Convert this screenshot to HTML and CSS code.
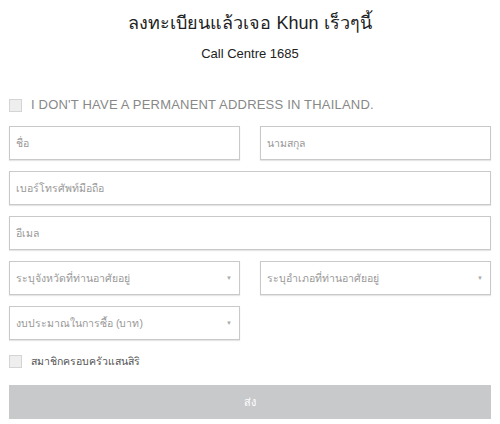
FILE: index.html
```html
<!DOCTYPE html>
<html lang="th">
<head>
    <meta charset="UTF-8">
    <meta name="viewport" content="width=device-width, initial-scale=1.0">
    <title>ลงทะเบียน</title>
    <link rel="stylesheet" href="styles.css">
</head>
<body>
    <div class="register-frame">
        <h1 class="title">ลงทะเบียนแล้วเจอ Khun เร็วๆนี้</h1>
        <p class="call-centre">Call Centre 1685</p>

        <label class="check-row address-check">
            <span class="check-box"></span>
            <span>I DON'T HAVE A PERMANENT ADDRESS IN THAILAND.</span>
        </label>

        <div class="form-grid">
            <input type="text" class="field" placeholder="ชื่อ">
            <input type="text" class="field" placeholder="นามสกุล">
            <input type="text" class="field wide" placeholder="เบอร์โทรศัพท์มือถือ">
            <input type="text" class="field wide" placeholder="อีเมล">
            <div class="field select-field">
                <span>ระบุจังหวัดที่ท่านอาศัยอยู่</span>
                <span class="arrow">▼</span>
            </div>
            <div class="field select-field">
                <span>ระบุอำเภอที่ท่านอาศัยอยู่</span>
                <span class="arrow">▼</span>
            </div>
            <div class="field select-field">
                <span>งบประมาณในการซื้อ (บาท)</span>
                <span class="arrow">▼</span>
            </div>
        </div>

        <label class="check-row member-check">
            <span class="check-box"></span>
            <span>สมาชิกครอบครัวแสนสิริ</span>
        </label>

        <button class="submit-button">ส่ง</button>
    </div>
</body>
</html>
```

FILE: styles.css
```css
body {
    font-family: "Liberation Sans", Arial, "Noto Sans", sans-serif;
    background-color: white;
    color: #333;
    margin: 0;
    padding: 0;
}
.register-frame {
    padding: 11px 9px 0 9px;
}
.title {
    font-size: 18px;
    font-weight: normal;
    text-align: center;
    color: #222;
    margin: 0;
    line-height: 24px;
}
.call-centre {
    font-size: 13px;
    text-align: center;
    color: #222;
    margin: 11px 0 0 0;
    line-height: 16px;
}
.check-row {
    display: flex;
    align-items: center;
    gap: 9px;
    color: #888;
}
.address-check {
    margin-top: 36px;
    font-size: 13px;
    letter-spacing: 0.2px;
    line-height: 14px;
}
.member-check {
    margin-top: 14px;
    font-size: 10.5px;
    color: #555;
    line-height: 14px;
}
.check-box {
    width: 11px;
    height: 11px;
    border: 1px solid #d4d4d4;
    background-color: #eee;
    display: inline-block;
}
.form-grid {
    display: grid;
    grid-template-columns: 1fr 1fr;
    column-gap: 20px;
    row-gap: 11px;
    margin-top: 14px;
}
.field {
    height: 34px;
    border: 1px solid #c9c9c9;
    box-shadow: 0 1px 1px #e6e6e6;
    box-sizing: border-box;
    padding: 0 7px 0 6px;
    font-size: 10.5px;
    color: #999;
    background-color: white;
    font-family: inherit;
    outline: none;
}
.field::placeholder {
    color: #999;
}
.wide {
    grid-column: 1 / 3;
}
.select-field {
    display: flex;
    align-items: center;
    justify-content: space-between;
}
.arrow {
    font-size: 6px;
    color: #aaa;
}
.submit-button {
    display: block;
    width: 100%;
    height: 34px;
    margin-top: 17px;
    border: none;
    background-color: #c8c9cb;
    color: white;
    font-size: 11px;
    font-family: inherit;
}
```
